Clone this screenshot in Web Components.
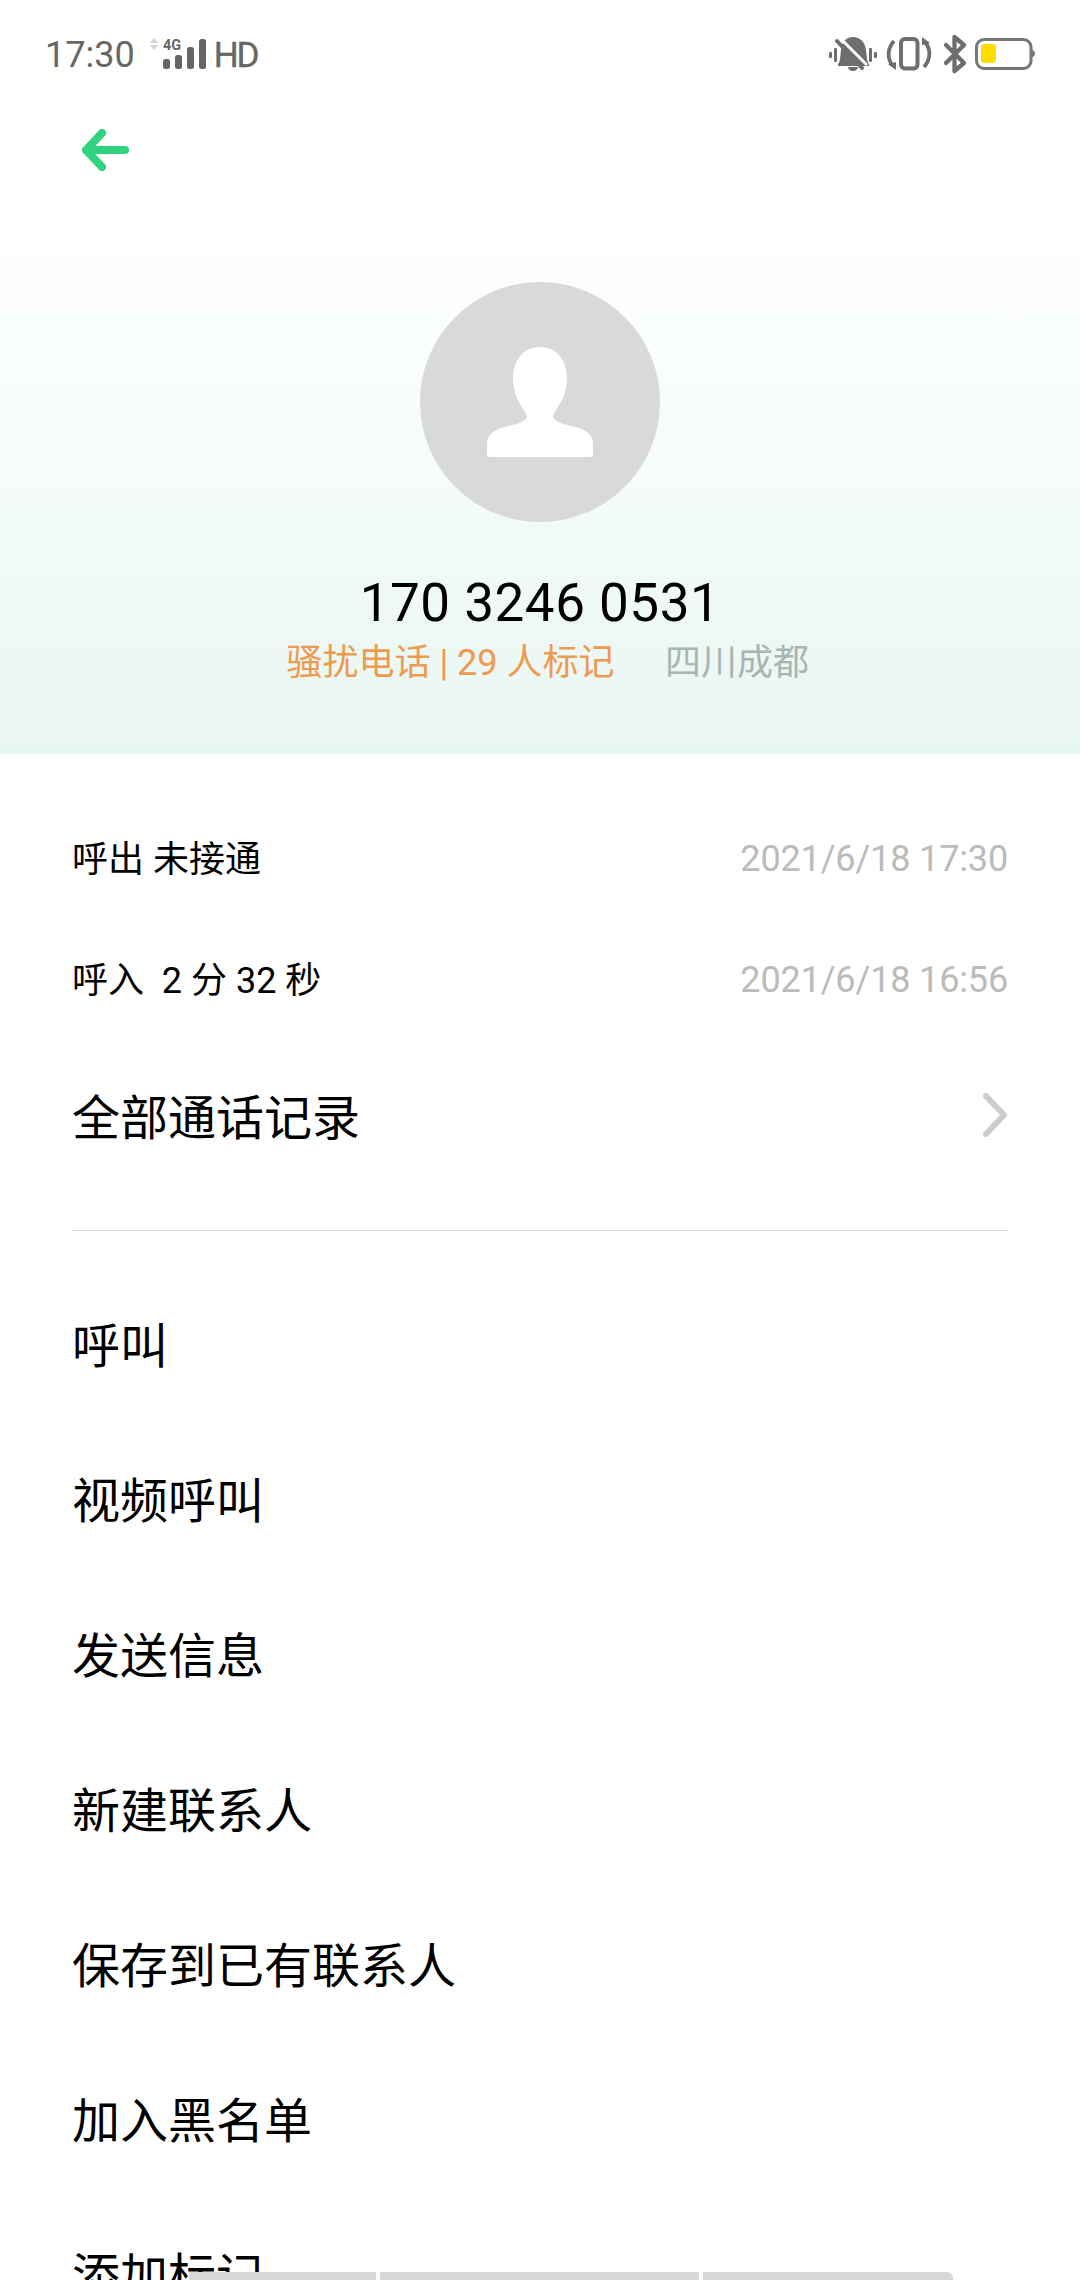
<!DOCTYPE html>
<html lang="zh"><head><meta charset="utf-8">
<style>
html,body{margin:0;padding:0;background:#fff}
body{width:1080px;height:2280px;overflow:hidden;position:relative;font-family:Roboto,"Noto Sans CJK SC",sans-serif;color:#000}
</style></head><body>
<status-bar></status-bar>
<back-bar></back-bar>
<contact-header number="170 3246 0531" tag="骚扰电话 | 29 人标记" place="四川成都"></contact-header>
<call-list>
  <call-row when="2021/6/18 17:30">呼出 未接通</call-row>
  <call-row when="2021/6/18 16:56">呼入&nbsp; 2 分 32 秒</call-row>
  <all-calls>全部通话记录</all-calls>
</call-list>
<action-list>
  <action-row>呼叫</action-row>
  <action-row>视频呼叫</action-row>
  <action-row>发送信息</action-row>
  <action-row>新建联系人</action-row>
  <action-row>保存到已有联系人</action-row>
  <action-row>加入黑名单</action-row>
  <action-row>添加标记</action-row>
</action-list>
<nav-hint></nav-hint>
<script>
function def(name, html){
  customElements.define(name, class extends HTMLElement{
    constructor(){super();this.attachShadow({mode:'open'});}
    connectedCallback(){
      let h=html;
      for(const a of this.getAttributeNames()) h=h.split('{{'+a+'}}').join(this.getAttribute(a));
      this.shadowRoot.innerHTML=h;
    }
  });
}
def('status-bar',`<style>
:host{display:flex;align-items:center;height:110px;padding:0 45px;box-sizing:border-box;color:#666;font-family:Roboto,sans-serif}
.t{font-size:36px;line-height:110px}
.hd{font-size:35px;font-weight:400;-webkit-text-stroke:.4px #666;letter-spacing:-2px;color:#666;margin-left:-1px}
.sp{flex:1}
svg{display:block;flex:none}
</style>
<span class="t">17:30</span>
<svg width="80" height="110" viewBox="0 0 80 110">
 <path d="M19 38l4.500 5h-9z M14.500 45h9l-4.500 5z" fill="#d4d4d4"/>
 <text x="28" y="50" font-family="Roboto,sans-serif" font-weight="700" font-size="14.500" fill="#666">4G</text>
 <rect x="28" y="59" width="7" height="10" rx="2.500" fill="#666"/>
 <rect x="40" y="55" width="7" height="14" rx="2.500" fill="#666"/>
 <rect x="52" y="47" width="7" height="22" rx="2.500" fill="#666"/>
 <rect x="64" y="39" width="7" height="30" rx="2.500" fill="#666"/>
</svg>
<span class="hd">HD</span>
<span class="sp"></span>
<svg width="206" height="50" viewBox="829 30 206 50" fill="#6e6e6e">
 <rect x="829" y="52" width="3" height="6" rx="1"/><rect x="834" y="48" width="3" height="14" rx="1"/>
 <rect x="869" y="48" width="3" height="14" rx="1"/><rect x="874" y="52" width="3" height="6" rx="1"/>
 <path d="M853 37c7 0 12 5 13 13l1 9c.5 3 2 4 2 6v1h-31v-1c0-2 2-3 2-6l1-9c1-8 5-13 12-13zM848 67h10c0 2-2 4-5 4s-5-2-5-4z"/>
 <path d="M839 37l28 28" stroke="#fff" stroke-width="3" fill="none"/>
 <path d="M837 41l25 27" stroke="#6e6e6e" stroke-width="4" fill="none" stroke-linecap="round"/>
 <rect x="901" y="39" width="16.500" height="29.500" rx="4" fill="none" stroke="#6e6e6e" stroke-width="4"/>
 <path d="M894 41c-7 8-7 18-1 25M924 67c7-8 7-18 1-25" fill="none" stroke="#6e6e6e" stroke-width="3.800"/>
 <path d="M888 64l8-2 0 8zM930 43l-8 2 0-8z"/>
 <path d="M946 45l18 18-9.500 8V37l9.500 8-18 18" fill="none" stroke="#6e6e6e" stroke-width="4.300" stroke-linejoin="round" stroke-linecap="round"/>
 <rect x="976.500" y="39.500" width="54.500" height="29" rx="7.500" fill="none" stroke="#777" stroke-width="3"/>
 <rect x="981" y="44" width="15" height="19" rx="3.500" fill="#ffdb00"/>
 <path d="M1032 50c2 0 3 2 3 3.500s-1 3.500-3 3.500z" fill="#777"/>
</svg>`);
def('back-bar',`<style>
:host{display:flex;align-items:center;height:80px;padding-left:81px}
svg{display:block}
</style>
<svg width="48" height="42" viewBox="0 0 48 42"><path d="M21 4L5 21l16 17M5 21h39" fill="none" stroke="#2ed27f" stroke-width="8" stroke-linecap="round" stroke-linejoin="round"/></svg>`);
def('contact-header',`<style>
:host{display:flex;flex-direction:column;align-items:center;height:564px;box-sizing:border-box;padding-top:92px;background:linear-gradient(180deg,#fff 0,#fcfefe 110px,#f8fdfc 210px,#f3fbf9 320px,#e8f6f2 100%)}
.a{width:240px;height:240px;border-radius:50%;background:#d9d9d9;display:flex;align-items:center;justify-content:center}
.n{font:400 53px/60px Roboto,sans-serif;letter-spacing:.5px;color:#000;margin-top:51px}
.s{display:flex;font:400 36px/50px Roboto,"Noto Sans CJK SC",sans-serif;margin-top:5px;gap:50.500px;padding-left:15.500px}
.o{color:#ef9a4f}.p{color:#a9b5b3}
svg{display:block}
</style>
<div class="a"><svg width="106" height="110" viewBox="0 0 106 110"><path d="M53 0C69 0 80 13 80 31C80 44 76 52 71 60C68 65 66 68 66 70C68 74 73 76 80 78C90 80 96 82 100 85C104 88 106 92 106 97V107C106 109 105 110 103 110H3C1 110 0 109 0 107V97C0 92 2 88 6 85C10 82 16 80 26 78C33 76 38 74 40 70C40 68 38 65 35 60C30 52 26 44 26 31C26 13 37 0 53 0Z" fill="#fff"/></svg></div>
<div class="n">{{number}}</div>
<div class="s"><span class="o">{{tag}}</span><span class="p">{{place}}</span></div>`);
def('call-list',`<style>:host{display:block;padding-top:44px}</style><slot></slot>`);
def('call-row',`<style>
:host{display:flex;align-items:center;justify-content:space-between;height:121px;padding:0 72px;font:400 36px Roboto,"Noto Sans CJK SC",sans-serif;color:#000}
.l{margin-bottom:6px}
.w{color:#bbb;font-size:36px;letter-spacing:-.15px}
</style><span class="l"><slot></slot></span><span class="w">{{when}}</span>`);
def('all-calls',`<style>
:host{display:flex;align-items:center;justify-content:space-between;height:147px;margin:0 72px 43px;font:400 48px Roboto,"Noto Sans CJK SC",sans-serif;color:#000}
svg{display:block;margin-top:2px}
</style><span><slot></slot></span><svg width="26" height="44" viewBox="0 0 26 44"><path d="M4 3l18 19L4 41" fill="none" stroke="#cdcdcd" stroke-width="6" stroke-linecap="round" stroke-linejoin="round"/></svg>`);
def('action-list',`<style>:host{display:block;margin:0 72px;padding-top:33px;border-top:1px solid #ddd}</style><slot></slot>`);
def('action-row',`<style>
:host{display:flex;align-items:center;height:155px;font:400 48px Roboto,"Noto Sans CJK SC",sans-serif;color:#000}
</style><slot></slot>`);
def('nav-hint',`<style>
:host{position:absolute;left:189px;top:2272px;width:764px;height:8px;display:grid;grid-template-columns:187px 319px 250px;gap:4px}
i{display:block;background:#d8d8d8}
i:first-child{border-radius:6px 0 0 0}i:last-child{border-radius:0 6px 0 0}
</style><i></i><i></i><i></i>`);
</script>
</body></html>
